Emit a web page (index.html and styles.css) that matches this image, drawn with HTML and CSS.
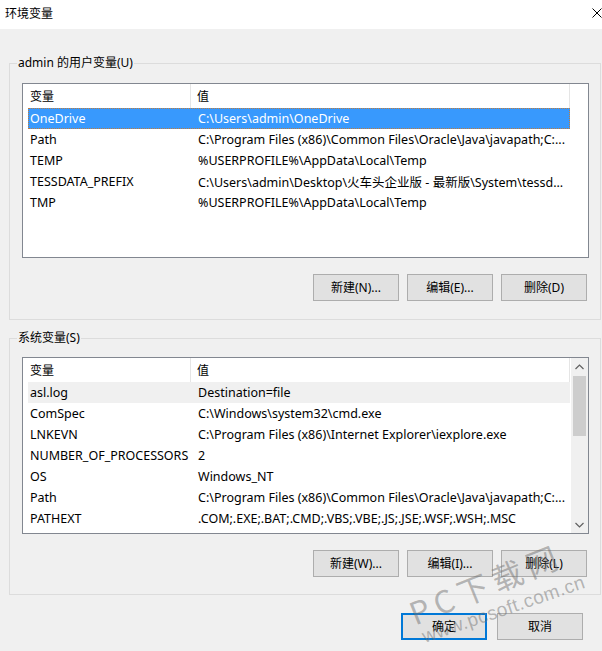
FILE: index.html
```html
<!DOCTYPE html>
<html lang="zh-CN">
<head>
<meta charset="utf-8">
<title>环境变量</title>
<link rel="stylesheet" href="styles.css">
</head>
<body>
<div class="window">
  <div class="titlebar">
    <span class="title">环境变量</span>
    <svg class="close" width="10" height="10" viewBox="0 0 10 10"><path d="M0.5 0.5 L9.5 9.5 M9.5 0.5 L0.5 9.5" stroke="#000" stroke-width="1" fill="none"/></svg>
  </div>

  <fieldset class="group group-user">
    <legend>admin 的用户变量(U)</legend>
    <div class="list list-user">
      <div class="list-inner">
        <div class="header">
          <div class="hcell h1">变量</div>
          <div class="hcell h2">值</div>
        </div>
        <div class="row selected"><div class="c1">OneDrive</div><div class="c2">C:\Users\admin\OneDrive</div></div>
        <div class="row"><div class="c1">Path</div><div class="c2">C:\Program Files (x86)\Common Files\Oracle\Java\javapath;C:...</div></div>
        <div class="row"><div class="c1">TEMP</div><div class="c2">%USERPROFILE%\AppData\Local\Temp</div></div>
        <div class="row"><div class="c1">TESSDATA_PREFIX</div><div class="c2">C:\Users\admin\Desktop\火车头企业版 - 最新版\System\tessd...</div></div>
        <div class="row"><div class="c1">TMP</div><div class="c2">%USERPROFILE%\AppData\Local\Temp</div></div>
      </div>
    </div>
    <div class="buttons">
      <button class="btn">新建(N)...</button>
      <button class="btn">编辑(E)...</button>
      <button class="btn">删除(D)</button>
    </div>
  </fieldset>

  <fieldset class="group group-sys">
    <legend>系统变量(S)</legend>
    <div class="list list-sys">
      <div class="list-inner sys-inner">
        <div class="sys-body">
          <div class="header">
            <div class="hcell h1">变量</div>
            <div class="hcell h2">值</div>
          </div>
          <div class="row inactive"><div class="c1">asl.log</div><div class="c2">Destination=file</div></div>
          <div class="row"><div class="c1">ComSpec</div><div class="c2">C:\Windows\system32\cmd.exe</div></div>
          <div class="row"><div class="c1">LNKEVN</div><div class="c2">C:\Program Files (x86)\Internet Explorer\iexplore.exe</div></div>
          <div class="row"><div class="c1">NUMBER_OF_PROCESSORS</div><div class="c2">2</div></div>
          <div class="row"><div class="c1">OS</div><div class="c2">Windows_NT</div></div>
          <div class="row"><div class="c1">Path</div><div class="c2">C:\Program Files (x86)\Common Files\Oracle\Java\javapath;C:...</div></div>
          <div class="row"><div class="c1">PATHEXT</div><div class="c2">.COM;.EXE;.BAT;.CMD;.VBS;.VBE;.JS;.JSE;.WSF;.WSH;.MSC</div></div>
        </div>
        <div class="scrollbar">
          <div class="arrow"><svg width="9" height="6" viewBox="0 0 9 6"><path d="M0.5 5 L4.5 1 L8.5 5" stroke="#606060" stroke-width="1.2" fill="none"/></svg></div>
          <div class="track"><div class="thumb"></div></div>
          <div class="arrow"><svg width="9" height="6" viewBox="0 0 9 6"><path d="M0.5 1 L4.5 5 L8.5 1" stroke="#606060" stroke-width="1.2" fill="none"/></svg></div>
        </div>
      </div>
    </div>
    <div class="buttons">
      <button class="btn">新建(W)...</button>
      <button class="btn">编辑(I)...</button>
      <button class="btn">删除(L)</button>
    </div>
  </fieldset>

  <div class="footer">
    <button class="btn btn-default">确定</button>
    <button class="btn">取消</button>
  </div>

  <div class="wm-big">PC下载网</div>
  <div class="wm-small">www.pcsoft.com.cn</div>
</div>
</body>
</html>
```

FILE: styles.css
```css
* { box-sizing: border-box; }

html, body {
  margin: 0;
  padding: 0;
}

body {
  width: 602px;
  height: 651px;
  overflow: hidden;
  background: #f0f0f0;
  font-family: "Noto Sans", "Noto Sans CJK SC", sans-serif;
  font-size: 12px;
  color: #000;
}

.window {
  position: relative;
  width: 602px;
  height: 651px;
  display: flex;
  flex-direction: column;
  overflow: hidden;
}

.titlebar {
  height: 29px;
  background: #fff;
  display: flex;
  align-items: center;
  justify-content: space-between;
  padding-left: 5px;
  flex-shrink: 0;
}

.title {
  font-size: 12px;
  line-height: 16px;
  margin-top: -2px;
}

.close {
  margin-top: -3px;
  display: block;
}

.group {
  margin: 0 1px 0 9px;
  padding: 0;
  border: 1px solid #dcdcdc;
  min-width: 0;
}

.group legend {
  margin-left: 7px;
  padding: 0 1px;
  line-height: 16px;
  height: 16px;
  font-size: 12px;
}

.group-user {
  margin-top: 26px;
  padding-bottom: 18px;
}

.group-sys {
  margin-top: 10px;
  padding-bottom: 17px;
}

.list {
  margin: 12px 11px 0 12px;
  border: 1px solid #828790;
  background: #fff;
}

.list-user { height: 175px; }
.list-sys { height: 177px; margin-top: 11px; }

.list-inner {
  height: 100%;
  overflow: hidden;
}

.sys-inner {
  display: flex;
}

.sys-body {
  flex: 1;
  overflow: hidden;
}

.header {
  display: flex;
  height: 24px;
  width: 547px;
}

.hcell {
  display: flex;
  align-items: center;
  border-right: 1px solid #e5e5e5;
}

.h1 {
  width: 168px;
  padding-left: 7px;
}

.h2 {
  width: 379px;
  padding-left: 6px;
}

.row {
  display: grid;
  grid-template-columns: 163px 379px;
  margin-left: 5px;
  width: 542px;
  height: 21px;
  align-items: center;
  white-space: nowrap;
  font-size: 12.5px;
}

.row .c1 {
  padding-left: 2px;
  overflow: hidden;
}

.row .c2 {
  padding-left: 7px;
  overflow: hidden;
}

.row.selected {
  background: #3899fd;
  color: #fff;
  outline: 1px dotted #c07c3c;
  outline-offset: -1px;
}

.row.inactive {
  background: #f0f0f0;
}

.scrollbar {
  width: 17px;
  flex-shrink: 0;
  background: #f0f0f0;
  display: flex;
  flex-direction: column;
}

.arrow {
  height: 17px;
  display: flex;
  align-items: center;
  justify-content: center;
}

.track {
  flex: 1;
  padding: 1px;
}

.thumb {
  height: 60px;
  background: #cdcdcd;
  margin: 0 1px;
}

.buttons {
  display: flex;
  justify-content: flex-end;
  gap: 8px;
  margin-top: 16px;
  padding-right: 13px;
}

.btn {
  width: 86px;
  height: 27px;
  border: 1px solid #adadad;
  background: #e1e1e1;
  font-family: "Noto Sans", "Noto Sans CJK SC", sans-serif;
  font-size: 12px;
  color: #000;
  padding: 0;
  margin: 0;
  line-height: 16px;
}

.btn-default {
  border: 2px solid #0078d7;
}

.footer {
  display: flex;
  justify-content: flex-end;
  gap: 10px;
  margin-top: 18px;
  padding-right: 19px;
}

.wm-big {
  position: absolute;
  left: 414px;
  top: 597px;
  font-family: "Noto Sans CJK SC", sans-serif;
  font-size: 31px;
  line-height: 32px;
  letter-spacing: 6px;
  color: rgba(110, 110, 110, 0.48);
  white-space: nowrap;
  transform: rotate(-22deg);
  transform-origin: 0 80%;
  pointer-events: none;
}

.wm-small {
  position: absolute;
  left: 425px;
  top: 627px;
  font-family: "Liberation Sans", sans-serif;
  font-size: 19px;
  line-height: 20px;
  letter-spacing: 0.5px;
  color: rgba(110, 110, 110, 0.48);
  white-space: nowrap;
  transform: rotate(-19deg);
  transform-origin: 0 85%;
  pointer-events: none;
}
```
